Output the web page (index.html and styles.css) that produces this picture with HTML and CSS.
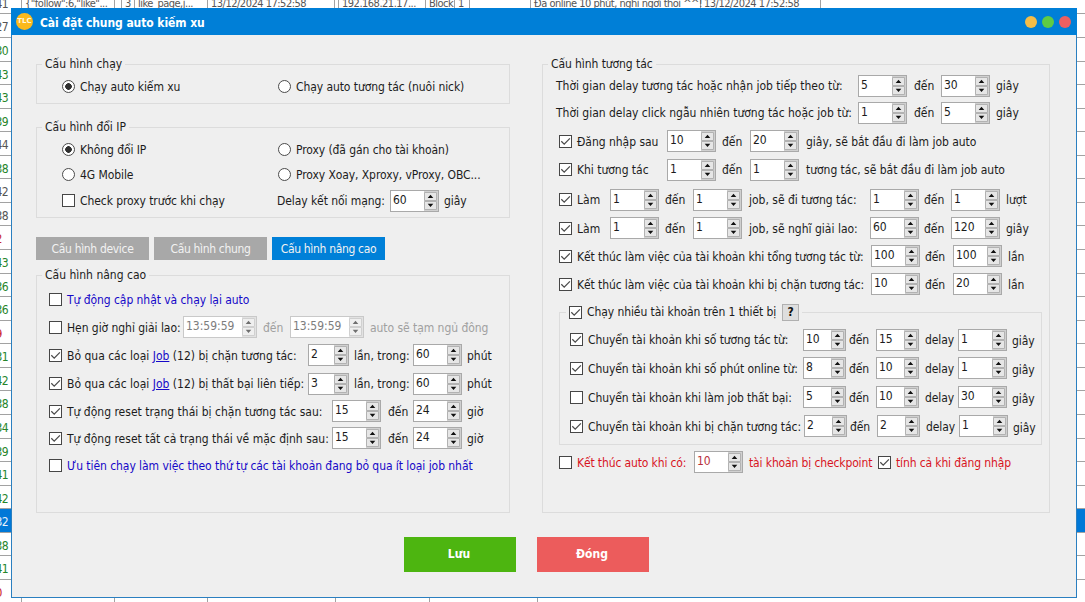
FILE: index.html
```html
<!DOCTYPE html>
<html lang="vi">
<head>
<meta charset="utf-8">
<title>Cài đặt chung auto kiếm xu</title>
<link rel="stylesheet" href="styles.css">
</head>
<body>
<div class="sheet" id="sheet"></div>
<main class="dialog">
  <header class="titlebar">
    <span class="logo">TLC</span>
    <h1>Cài đặt chung auto kiếm xu</h1>
    <span class="dots"><i class="dot amber"></i><i class="dot green"></i><i class="dot red"></i></span>
  </header>
  <div class="columns">
    <section class="left">
      <fieldset class="group g-run">
        <legend>Cấu hình chạy</legend>
        <div class="row r-radio"><i class="radio on"></i><span>Chạy auto kiếm xu</span><i class="radio"></i><span>Chạy auto tương tác (nuôi nick)</span></div>
      </fieldset>
      <fieldset class="group g-ip">
        <legend>Cấu hình đổi IP</legend>
        <div class="row r-radio"><i class="radio on"></i><span>Không đổi IP</span><i class="radio"></i><span>Proxy (đã gán cho tài khoản)</span></div>
        <div class="row r-radio"><i class="radio"></i><span>4G Mobile</span><i class="radio"></i><span>Proxy Xoay, Xproxy, vProxy, OBC...</span></div>
        <div class="row r-proxy"><i class="check"></i><span>Check proxy trước khi chạy</span><span>Delay kết nối mạng:</span><b class="spin">60</b><span>giây</span></div>
      </fieldset>
      <nav class="tabs"><a>Cấu hình device</a><a>Cấu hình chung</a><a class="active">Cấu hình nâng cao</a></nav>
      <fieldset class="group g-adv">
        <legend>Cấu hình nâng cao</legend>
        <div class="row r-text blue"><i class="check"></i><span>Tự động cập nhật và chạy lại auto</span></div>
        <div class="row r-time"><i class="check"></i><span>Hẹn giờ nghỉ giải lao:</span><b class="spin time">13:59:59</b><span class="dim">đến</span><b class="spin time">13:59:59</b><span class="dim">auto sẽ tạm ngủ đông</span></div>
        <div class="row r-skip"><i class="check on"></i><span>Bỏ qua các loại <a class="link">Job</a> (12) bị chặn tương tác:</span><b class="spin xs">2</b><span>lần, trong:</span><b class="spin">60</b><span>phút</span></div>
        <div class="row r-skip"><i class="check on"></i><span>Bỏ qua các loại <a class="link">Job</a> (12) bị thất bại liên tiếp:</span><b class="spin xs">3</b><span>lần, trong:</span><b class="spin">60</b><span>phút</span></div>
        <div class="row r-reset"><i class="check on"></i><span>Tự động reset trạng thái bị chặn tương tác sau:</span><b class="spin">15</b><span>đến</span><b class="spin">24</b><span>giờ</span></div>
        <div class="row r-reset"><i class="check on"></i><span>Tự động reset tất cả trạng thái về mặc định sau:</span><b class="spin">15</b><span>đến</span><b class="spin">24</b><span>giờ</span></div>
        <div class="row r-text blue"><i class="check"></i><span>Ưu tiên chạy làm việc theo thứ tự các tài khoản đang bỏ qua ít loại job nhất</span></div>
      </fieldset>
    </section>
    <fieldset class="group g-act">
      <legend>Cấu hình tương tác</legend>
      <div class="row r-delay"><span>Thời gian delay tương tác hoặc nhận job tiếp theo từ:</span><b class="spin">5</b><span>đến</span><b class="spin">30</b><span>giây</span></div>
      <div class="row r-delay"><span>Thời gian delay click ngẫu nhiên tương tác hoặc job từ:</span><b class="spin">1</b><span>đến</span><b class="spin">5</b><span>giây</span></div>
      <div class="row r-login"><i class="check on"></i><span>Đăng nhập sau</span><b class="spin">10</b><span>đến</span><b class="spin">20</b><span>giây, sẽ bắt đầu đi làm job auto</span></div>
      <div class="row r-login"><i class="check on"></i><span>Khi tương tác</span><b class="spin">1</b><span>đến</span><b class="spin">1</b><span>tương tác, sẽ bắt đầu đi làm job auto</span></div>
      <div class="row r-job"><i class="check on"></i><span>Làm</span><b class="spin">1</b><span>đến</span><b class="spin">1</b><span>job, sẽ đi tương tác:</span><b class="spin">1</b><span>đến</span><b class="spin">1</b><span>lượt</span></div>
      <div class="row r-job"><i class="check on"></i><span>Làm</span><b class="spin">1</b><span>đến</span><b class="spin">1</b><span>job, sẽ nghĩ giải lao:</span><b class="spin">60</b><span>đến</span><b class="spin">120</b><span>giây</span></div>
      <div class="row r-end"><i class="check on"></i><span>Kết thúc làm việc của tài khoản khi tổng tương tác từ:</span><b class="spin">100</b><span>đến</span><b class="spin">100</b><span>lần</span></div>
      <div class="row r-end"><i class="check on"></i><span>Kết thúc làm việc của tài khoản khi bị chặn tương tác:</span><b class="spin">10</b><span>đến</span><b class="spin">20</b><span>lần</span></div>
      <fieldset class="group g-multi">
        <legend><i class="check on"></i><span>Chạy nhiều tài khoản trên 1 thiết bị</span><b class="help">?</b></legend>
        <div class="row r-switch"><i class="check on"></i><span>Chuyển tài khoản khi số tương tác từ:</span><b class="spin sm">10</b><span>đến</span><b class="spin sm">15</b><span>delay</span><b class="spin">1</b><span class="low">giây</span></div>
        <div class="row r-switch"><i class="check on"></i><span>Chuyển tài khoản khi số phút online từ:</span><b class="spin sm">8</b><span>đến</span><b class="spin sm">10</b><span>delay</span><b class="spin">1</b><span class="low">giây</span></div>
        <div class="row r-switch"><i class="check"></i><span>Chuyển tài khoản khi làm job thất bại:</span><b class="spin sm">5</b><span>đến</span><b class="spin sm">10</b><span>delay</span><b class="spin">30</b><span class="low">giây</span></div>
        <div class="row r-switch last"><i class="check on"></i><span>Chuyển tài khoản khi bị chặn tương tác:</span><b class="spin sm">2</b><span>đến</span><b class="spin sm">2</b><span>delay</span><b class="spin">1</b><span class="low">giây</span></div>
      </fieldset>
      <div class="row r-stop crimson"><i class="check"></i><span>Kết thúc auto khi có:</span><b class="spin">10</b><span>tài khoản bị checkpoint</span><i class="check on"></i><span>tính cả khi đăng nhập</span></div>
    </fieldset>
  </div>
  <footer class="actions"><button class="save">Lưu</button><button class="close">Đóng</button></footer>
</main>
<script src="app.js"></script>
</body>
</html>
```
FILE: styles.css
```css
* { box-sizing: border-box; }
html, body { margin: 0; height: 100%; overflow: hidden; background: #fff; }
body { position: relative; font: 12px/16px "DejaVu Sans Condensed", "DejaVu Sans", sans-serif; font-stretch: condensed; color: #1c1c1c; }
i, b { font-style: normal; font-weight: normal; }

/* data sheet behind the dialog */
.sheet { margin-top: -9.2px; height: 640px; color: #555; }
.line { display: grid; height: 23.57px; border-bottom: 1px solid #a2a2a2; align-items: center; grid-template-columns: 22px 93px 93px 128px 94px 108px auto; }
.line.top { grid-template-columns: 22px 93px 7px 13px 73px 127px 4px 87px 29px 15px 61px 170px 120px auto; }
.line > span { height: 100%; border-right: 1px solid #a2a2a2; padding: 5px 0 0 3px; white-space: nowrap; font-size: 11px; line-height: 16px; letter-spacing: -0.5px; }
.line > span:first-child { padding-left: 0; text-indent: -4.5px; font-size: 12px; }
.line > span:last-child { border: 0; }
.line.ok > span:first-child { color: #26852a; }
.line.bad > span:first-child { color: #c8202c; }
.line.selected { background: #0078d7; }
.line.selected > span:first-child { color: #e6f2fc; }

.dialog { position: absolute; left: 11px; top: 8px; width: 1066px; height: 590px; background: #efefef; border: 1px solid #2a7fc0; border-top: 0; display: flex; flex-direction: column; }
.titlebar { height: 27px; flex: none; margin: 0 -1px; padding: 0 6px 0 5px; background: #007fd7; display: flex; align-items: center; }
.logo { width: 17px; height: 17px; border-radius: 50%; background: #fbb91c; color: #fff8dc; font: bold 7px/17px "DejaVu Sans", sans-serif; text-align: center; }
h1 { margin: 2px 0 0 7px; color: #fff; font-size: 12px; line-height: 16px; font-weight: bold; letter-spacing: -0.08px; }
.dots { margin-left: auto; display: flex; gap: 5px; }
.dot { width: 12px; height: 12px; border-radius: 50%; }
.amber { background: #f5bd48; }
.green { background: #5fcb45; }
.red { background: #ed5f60; }

.columns { display: flex; gap: 32px; padding: 21px 0 0 24px; align-items: flex-start; }
.left { width: 474px; }
.group { margin: 0; min-width: 0; border: 1px solid #dcdcdc; padding: 0; display: grid; align-content: start; }
legend { height: 16px; margin-left: 5px; padding: 0 3px; white-space: nowrap; }
.g-run { height: 48px; grid-template-rows: 28px; }
.g-ip { height: 99px; margin-top: 15px; grid-template-rows: 28px 23px 29px; }
.g-adv { height: 246px; grid-template-rows: 32px 24px 32px 25px 30px 24px 30px; }
.g-act { width: 508px; height: 457px; padding-left: 1px; grid-template-rows: 27px 27px 30px 27px 33px 24px 32px 24px 149px 34px; }
.g-act > legend { margin-left: 4px; letter-spacing: -0.08px; }
.g-multi { height: 141px; width: 483px; margin: 8px 0 0 15px; padding-top: 6px; grid-template-rows: 27px 30px 28px 30px; }
.g-multi legend { display: flex; align-items: center; margin-left: 6px; letter-spacing: -0.08px; }
.g-multi legend span { width: 195px; margin-left: 5px; }

.row { display: grid; align-items: center; align-content: center; white-space: nowrap; }
.row > span { width: 0; margin-top: 1px; }
.row > .low { margin-top: 3px; }
.r-radio { padding-left: 25px; grid-template-columns: 18px 198px 18px auto; letter-spacing: -0.08px; }
.r-proxy { padding-left: 25px; grid-template-columns: 18px 197px 113px 54px auto; letter-spacing: -0.08px; }
.r-text { padding-left: 12px; grid-template-columns: 18px auto; letter-spacing: -0.06px; }
.r-time { padding-left: 12px; grid-template-columns: 18px 116px 80px 27px 80px auto; letter-spacing: -0.05px; }
.r-skip { padding-left: 12px; grid-template-columns: 18px 241px 46px 59px 54px auto; }
.r-reset { padding-left: 12px; grid-template-columns: 18px 265px 56px 25px 54px auto; }
.r-delay { padding-left: 12px; grid-template-columns: 302px 56px 27px 55px auto; letter-spacing: -0.02px; }
.r-login { padding-left: 15px; grid-template-columns: 18px 90px 55px 28px 56px auto; letter-spacing: -0.03px; }
.r-job { padding-left: 15px; grid-template-columns: 18px 33px 55px 28px 56px 121px 54px 27px 55px auto; }
.r-end { padding-left: 15px; grid-template-columns: 18px 294px 54px 28px 55px auto; letter-spacing: -0.09px; }
.r-switch { padding-left: 10px; grid-template-columns: 18px 215px 46px 27px 49px 33px 54px auto; letter-spacing: -0.08px; }
.r-switch.last { grid-template-columns: 18px 216px 46px 27px 49px 33px 54px auto; }
.r-stop { padding-left: 15px; grid-template-columns: 18px 117px 55px 129px 18px auto; letter-spacing: -0.13px; }

.radio { width: 13px; height: 13px; border: 1px solid #4b4b4b; border-radius: 50%; background: #fff; }
.radio.on { background: radial-gradient(circle, #303030 0 3px, #fff 3.6px); }
.check { width: 13px; height: 13px; border: 1px solid #464646; background: #fff; display: block; flex: none; }
.check svg, .spin svg { display: block; }
.spin { width: 49px; height: 22px; border: 1px solid #a9a9a9; background: #fff; display: flex; justify-content: space-between; line-height: 18px; padding-left: 2px; letter-spacing: 0; }
.spin.sm { width: 43px; }
.spin.xs { width: 41px; }
.spin.time { width: 74px; color: #7d7d7d; border-color: #c9c9c9; }
.spin.time svg { opacity: .6; }
.blue { color: #1608c8; }
.crimson { color: #d8141e; }
.crimson .spin { color: #b8303a; }
.dim { color: #a0a0a0; }
.link { color: #1608c8; text-decoration: underline; }
.help { width: 17px; height: 17px; border: 1px solid #b0b0b0; background: #dedede; font-weight: bold; line-height: 15px; text-align: center; color: #111; }

.tabs { display: flex; gap: 5px; margin: 19px 0 7px; }
.tabs a { width: 113px; height: 23px; background: #a8a8a8; color: #f2f2f2; text-align: center; line-height: 24px; white-space: nowrap; letter-spacing: -0.33px; }
.tabs .active { background: #0080d8; }
.actions { display: flex; gap: 21px; padding: 24px 0 0 392px; }
.actions button { width: 112px; height: 35px; border: 0; padding: 0 2px 0 0; color: #fff; font: bold 12px/35px "DejaVu Sans Condensed", "DejaVu Sans", sans-serif; }
.save { background: #4db510; }
.close { background: #ec5c5c; }
```
FILE: app.js
```js
const header = ["41", '{"follow":6,"like"...', "", "3", "like_page,j...", "13/12/2024 17:52:58", "", "192.168.21.17...", "Block", "1", "", "Đã online 10 phút, nghỉ ngơi thôi ^^!", "13/12/2024 17:52:58", ""];
const rows = ["27", "30 ok", "43 ok", "43 ok", "39 ok", "44", "38 ok", "42", "38", "2 bad", "43 ok", "36 ok", "36 ok", "9 bad", "31 ok", "42 ok", "38 ok", "34 ok", "39 ok", "41 ok", "42 ok", "32 selected", "38 ok", "41 ok", "0 bad"];
const line = (cells, state) => `<div class="line ${state || ""}">${cells.map(c => `<span>${c}</span>`).join("")}</div>`;
document.getElementById("sheet").innerHTML = line(header, "top") + rows.map(r => {
  const [n, state] = r.split(" ");
  return line([n, ...Array(6).fill("")], state);
}).join("");

/* tick marks and spinner arrows */
document.querySelectorAll(".check.on").forEach(e => {
  e.innerHTML = '<svg width="11" height="11" viewBox="0 0 11 11"><path d="M1.3 5.2 4.2 8.1 9.9 2.4" fill="none" stroke="#4a4a4a" stroke-width="1.25"/></svg>';
});
document.querySelectorAll(".spin").forEach(e => {
  e.innerHTML = `<span>${e.textContent}</span><svg width="15" height="20" viewBox="0 0 15 20"><path fill="#d0d0d0" d="M1 0h14v20H1z"/><path fill="#e6e6e6" stroke="#b2b2b2" d="M1.5 1.5h12v8h-12zM1.5 10.5h12v8h-12z"/><path fill="#111" d="M7.5 3.8 10.3 7H4.7zM7.5 16 4.7 12.8h5.6z"/></svg>`;
});
```
